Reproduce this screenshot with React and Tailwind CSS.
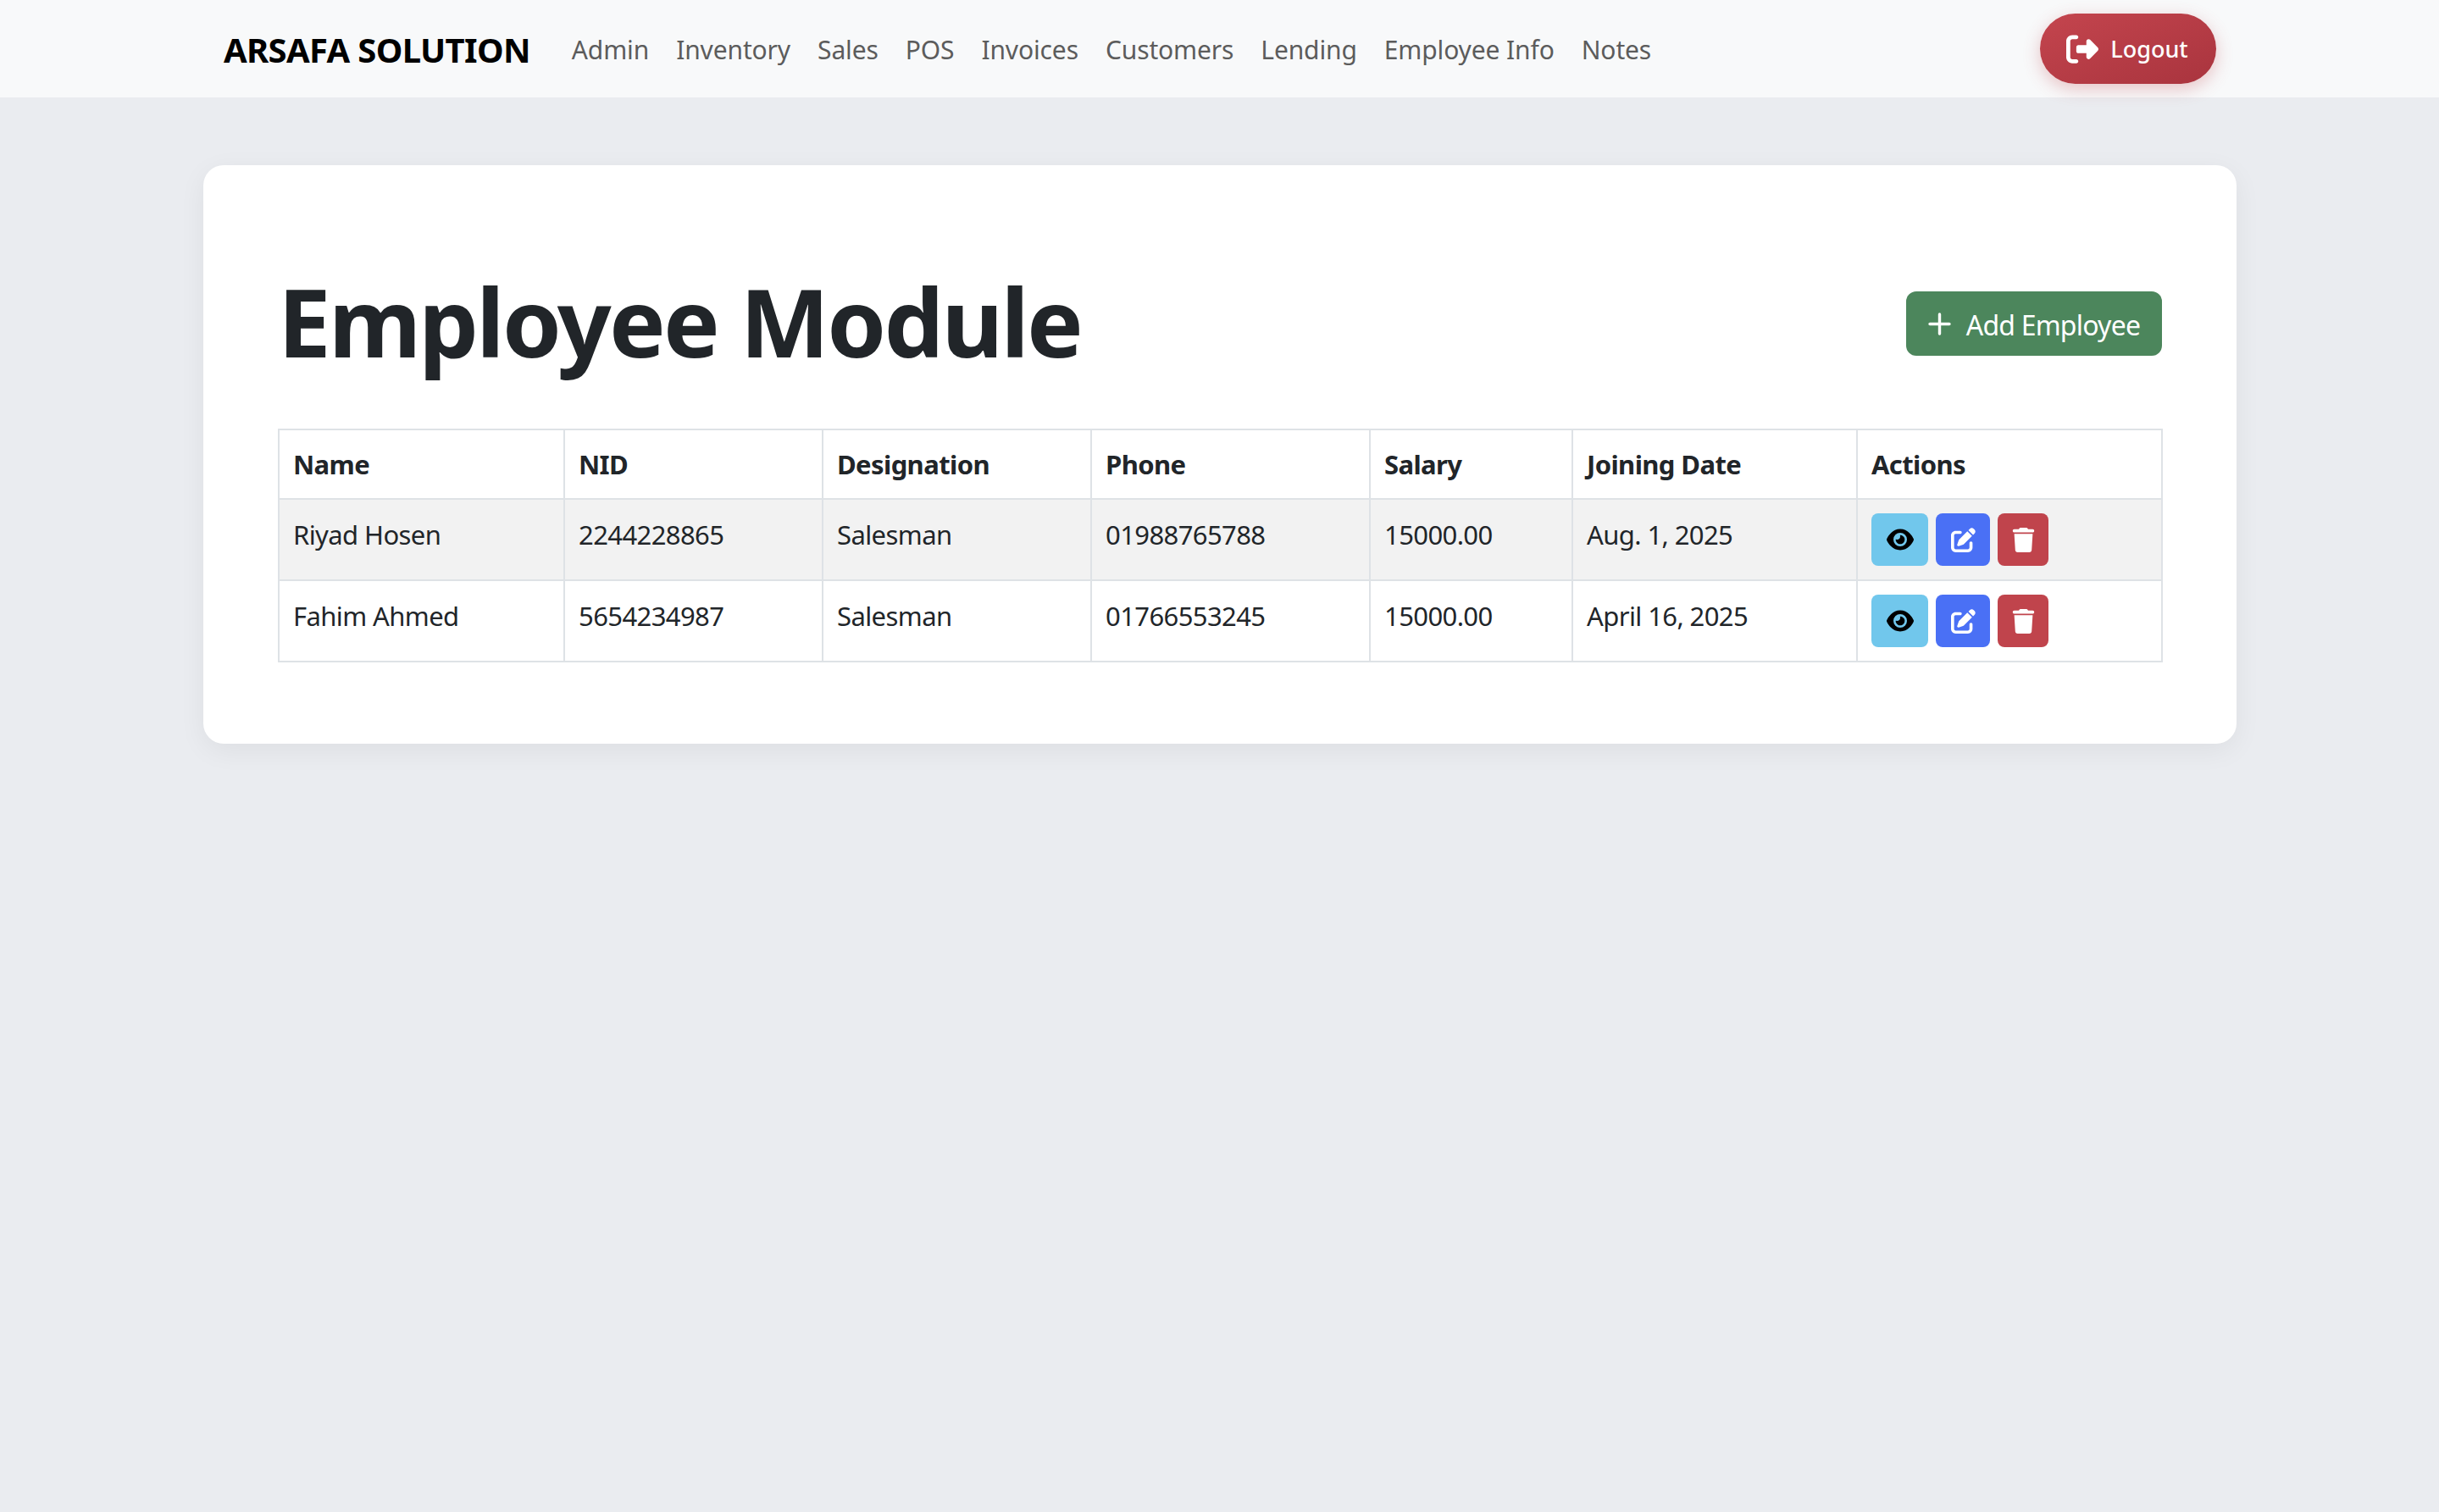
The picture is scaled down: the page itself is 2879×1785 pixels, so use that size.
import React from "react";
import { FaEye, FaPenToSquare, FaTrash, FaRightFromBracket } from "react-icons/fa6";

const links = ["Admin", "Inventory", "Sales", "POS", "Invoices", "Customers", "Lending", "Employee Info", "Notes"];
const heads = [
  ["Name", "w-[337px]"],
  ["NID", "w-[305px]"],
  ["Designation", "w-[317px]"],
  ["Phone", "w-[329px]"],
  ["Salary", "w-[239px]"],
  ["Joining Date", "w-[336px]"],
  ["Actions", "w-[360px]"],
];
const rows = [
  ["Riyad Hosen", "2244228865", "Salesman", "01988765788", "15000.00", "Aug. 1, 2025"],
  ["Fahim Ahmed", "5654234987", "Salesman", "01766553245", "15000.00", "April 16, 2025"],
];

function Actions() {
  return (
    <div className="flex gap-[9px]">
      <button className="w-[67px] h-[62px] rounded-[8px] bg-[#71c7ec] flex items-center justify-center text-black">
        <FaEye className="w-[32px] h-[32px]" />
      </button>
      <button className="w-[64px] h-[62px] rounded-[8px] bg-[#4a70f5] flex items-center justify-center text-white">
        <FaPenToSquare className="w-[29px] h-[29px]" />
      </button>
      <button className="w-[60px] h-[62px] rounded-[8px] bg-[#c0444c] flex items-center justify-center text-white">
        <FaTrash className="w-[29px] h-[29px]" />
      </button>
    </div>
  );
}

export default function App() {
  return (
    <div className="min-h-[1785px] bg-[#eaecf0] font-['Noto_Sans',sans-serif] text-[#212529]">
      <nav className="h-[115px] bg-[#f8f9fa] flex items-center pl-[264px] pr-[263px]">
        <span className="text-[40px] font-bold text-black tracking-[-0.65px] mr-[49px] pt-[2px]">ARSAFA SOLUTION</span>
        <div className="flex gap-[32px] pt-[2px]">
          {links.map((l) => (
            <a key={l} className="text-[30px] text-[#5c5c5c] tracking-[-0.13px]">{l}</a>
          ))}
        </div>
        <button className="ml-auto w-[208px] h-[83px] rounded-full bg-gradient-to-br from-[#c4454e] to-[#a9343e] text-white flex items-center justify-center gap-[14px] text-[27px] font-medium shadow-[0_6px_20px_rgba(192,68,76,0.3)]">
          <FaRightFromBracket className="w-[38px] h-[38px] -ml-[2px]" />
          <span className="pt-[2px]">Logout</span>
        </button>
      </nav>
      <main className="ml-[240px] mt-[80px] w-[2400px] h-[683px] bg-white rounded-[24px] shadow-[0_8px_32px_rgba(0,0,0,0.06)] pl-[89px] pr-[88px] pt-[149px]">
        <div className="flex items-center justify-between h-[76px] mb-[86px]">
          <h1 className="text-[112px] font-bold tracking-[-2.8px] leading-none text-[#212529] relative -top-[3px] -left-[1px]">Employee Module</h1>
          <button className="w-[302px] h-[76px] rounded-[12px] bg-[#4c865c] text-white flex items-center justify-center gap-[18px] text-[32px] tracking-[-0.8px]">
            <svg viewBox="0 0 27 27" className="w-[27px] h-[27px]" fill="none" stroke="currentColor" strokeWidth="3.4" strokeLinecap="round">
              <path d="M13.5 2v23M2 13.5h23" />
            </svg>
            <span className="relative top-[2px]">Add Employee</span>
          </button>
        </div>
        <table className="w-[2223px] -ml-px table-fixed border-collapse border-2 border-[#dee2e6] text-[31px] tracking-[-0.6px]">
          <thead>
            <tr className="h-[82px]">
              {heads.map(([h, w]) => (
                <th key={h} className={`${w} border-2 border-[#dee2e6] px-[16px] pt-[1px] text-left font-bold tracking-[-0.6px]`}>{h}</th>
              ))}
            </tr>
          </thead>
          <tbody>
            {rows.map((r, i) => (
              <tr key={r[0]} className={i === 0 ? "h-[96px] bg-[#f2f2f2]" : "h-[96px] bg-white"}>
                {r.map((c, j) => (
                  <td key={j} className="border-2 border-[#dee2e6] px-[16px] pt-[18px] align-top">{c}</td>
                ))}
                <td className="border-2 border-[#dee2e6] px-[16px] align-middle"><Actions /></td>
              </tr>
            ))}
          </tbody>
        </table>
      </main>
    </div>
  );
}
